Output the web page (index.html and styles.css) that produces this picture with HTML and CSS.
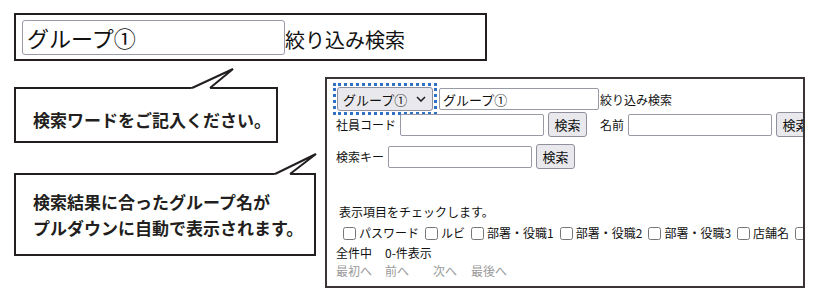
FILE: index.html
```html
<!DOCTYPE html>
<html lang="ja">
<head>
    <meta charset="UTF-8">
    <meta name="viewport" content="width=device-width, initial-scale=1.0">
    <link rel="stylesheet" href="styles.css">
    <title>グループ絞り込み検索</title>
</head>
<body>

<div class="page">
    <!-- enlarged view of the filter field -->
    <div class="zoom-box">
        <input class="zoom-input" type="text" value="グループ①">
        <span class="zoom-label">絞り込み検索</span>
    </div>

    <div class="figure-row">
        <div class="callouts">
            <div class="callout callout-word">
                <svg class="tail tail-word" width="56" height="26" viewBox="0 0 56 26">
                    <path d="M5 25 L6 23 L47 4 L24 23 L25 25 Z" fill="#fff"/>
                    <polyline points="6,23 47,4 24,23" fill="none" stroke="#231f20" stroke-width="2"/>
                </svg>
                <p>検索ワードをご記入ください。</p>
            </div>
            <div class="callout callout-result">
                <svg class="tail tail-result" width="56" height="26" viewBox="0 0 56 26">
                    <path d="M8 25 L9 23 L50 3 L24 23 L25 25 Z" fill="#fff"/>
                    <polyline points="9,23 50,3 24,23" fill="none" stroke="#231f20" stroke-width="2"/>
                </svg>
                <p>検索結果に合ったグループ名が<br>プルダウンに自動で表示されます。</p>
            </div>
        </div>

        <!-- screenshot of the search screen -->
        <div class="screen">
            <div class="row row-group">
                <div class="select-wrap">
                    <select class="group-select">
                        <option>グループ①</option>
                    </select>
                    <svg class="chevron" width="10" height="6" viewBox="0 0 10 6">
                        <polyline points="1,1 5,5 9,1" fill="none" stroke="#222" stroke-width="1.6"/>
                    </svg>
                </div>
                <input class="text-box wide" type="text" value="グループ①">
                <span class="filter-label">絞り込み検索</span>
            </div>

            <div class="row row-code">
                <label for="code">社員コード</label>
                <input class="text-box" id="code" type="text">
                <button>検索</button>
                <label class="name-label" for="name">名前</label>
                <input class="text-box" id="name" type="text">
                <button>検索</button>
            </div>

            <div class="row row-key">
                <label for="key">検索キー</label>
                <input class="text-box" id="key" type="text">
                <button>検索</button>
            </div>

            <p class="check-title">表示項目をチェックします。</p>
            <div class="check-row">
                <label class="check-item"><input type="checkbox">パスワード</label>
                <label class="check-item"><input type="checkbox">ルビ</label>
                <label class="check-item"><input type="checkbox">部署・役職1</label>
                <label class="check-item"><input type="checkbox">部署・役職2</label>
                <label class="check-item"><input type="checkbox">部署・役職3</label>
                <label class="check-item"><input type="checkbox">店舗名</label>
                <label class="check-item"><input type="checkbox"></label>
            </div>

            <p class="count">全件中<span class="count-num">0-件表示</span></p>
            <p class="pager">
                <span class="pager-first">最初へ</span>
                <span class="pager-prev">前へ</span>
                <span class="pager-next">次へ</span>
                <span>最後へ</span>
            </p>
        </div>
    </div>
</div>

</body>
</html>
```

FILE: styles.css
```css
body {
    margin: 0;
    background-color: #fff;
    font-family: "Noto Sans CJK JP", "Liberation Sans", sans-serif;
    color: #231f20;
}

p {
    margin: 0;
}

.page {
    padding: 13px 0 0 14px;
}

/* enlarged field at the top */
.zoom-box {
    width: 473px;
    height: 48px;
    box-sizing: border-box;
    border: 2px solid #231f20;
    display: flex;
    align-items: center;
    padding-left: 6px;
}

.zoom-input {
    width: 263px;
    height: 35px;
    box-sizing: border-box;
    border: 1.5px solid #9a9aac;
    border-radius: 3px;
    padding: 0 0 0 4px;
    font-family: inherit;
    font-size: 22px;
    color: #111;
}

.zoom-label {
    font-size: 20px;
    color: #111;
    padding-top: 4px;
}

.figure-row {
    display: flex;
    align-items: flex-start;
    gap: 9px;
    margin-top: 16px;
}

/* speech bubbles */
.callouts {
    width: 302px;
    display: flex;
    flex-direction: column;
    align-items: flex-start;
    padding-top: 10px;
}

.callout {
    position: relative;
    box-sizing: border-box;
    border: 2px solid #231f20;
    background-color: #fff;
    font-size: 17px;
    font-weight: 700;
    color: #231f20;
}

.callout-word {
    width: 264px;
    height: 56px;
    padding: 19px 0 0 17px;
    line-height: 24px;
}

.callout-result {
    width: 302px;
    height: 83px;
    margin-top: 30px;
    padding: 14px 0 0 17px;
    line-height: 26px;
}

.tail {
    position: absolute;
    top: -24px;
}

.tail-word {
    left: 170px;
}

.tail-result {
    left: 250px;
}

/* search screen */
.screen {
    width: 480px;
    height: 211px;
    box-sizing: border-box;
    border: 2px solid #3a3434;
    overflow: hidden;
    padding: 8px 0 0 9px;
    font-size: 12px;
    color: #111;
    white-space: nowrap;
}

.row {
    display: flex;
    align-items: center;
    gap: 4px;
}

.row > *,
.check-row > * {
    flex-shrink: 0;
}

.row-code {
    margin-top: 1px;
}

.row-key {
    margin-top: 7px;
}

.select-wrap {
    display: flex;
    align-items: center;
    margin-left: 1px;
    margin-right: 1px;
    outline: 3px dotted #2f72c4;
    outline-offset: 1px;
}

.group-select {
    appearance: none;
    width: 96px;
    height: 24px;
    box-sizing: border-box;
    border: 1px solid #8f8f9d;
    border-radius: 3px;
    background-color: #e9e9ed;
    padding: 0 0 0 5px;
    font-family: inherit;
    font-size: 13px;
    color: #111;
}

.chevron {
    margin-left: -17px;
    margin-right: 7px;
    pointer-events: none;
}

.text-box {
    width: 144px;
    height: 22px;
    box-sizing: border-box;
    border: 1px solid #9a9aa6;
    border-radius: 2px;
    padding: 0 3px;
    font-family: inherit;
    font-size: 13px;
    color: #111;
}

.text-box.wide {
    width: 160px;
    margin-left: 1px;
}

.filter-label {
    margin-left: -3px;
}

button {
    width: 39px;
    height: 25px;
    box-sizing: border-box;
    border: 1px solid #8f8f9d;
    border-radius: 3px;
    background-color: #e9e9ed;
    padding: 0;
    font-family: inherit;
    font-size: 13px;
    color: #111;
}

.name-label {
    margin-left: 9px;
}

.check-title {
    margin-top: 35px;
    padding-left: 3px;
    line-height: 16px;
}

.check-row {
    display: flex;
    gap: 6px;
    margin-top: 4px;
    padding-left: 7px;
    line-height: 18px;
}

.check-item {
    display: flex;
    align-items: center;
}

.check-item input {
    width: 13px;
    height: 13px;
    margin: 0 3px 0 0;
}

.count {
    margin-top: 2px;
    line-height: 17.5px;
    color: #111;
}

.count-num {
    margin-left: 13px;
}

.pager {
    display: flex;
    line-height: 17.5px;
    color: #9a9a9a;
}

.pager-first {
    margin-right: 13px;
}

.pager-prev {
    margin-right: 24px;
}

.pager-next {
    margin-right: 14px;
}
```
